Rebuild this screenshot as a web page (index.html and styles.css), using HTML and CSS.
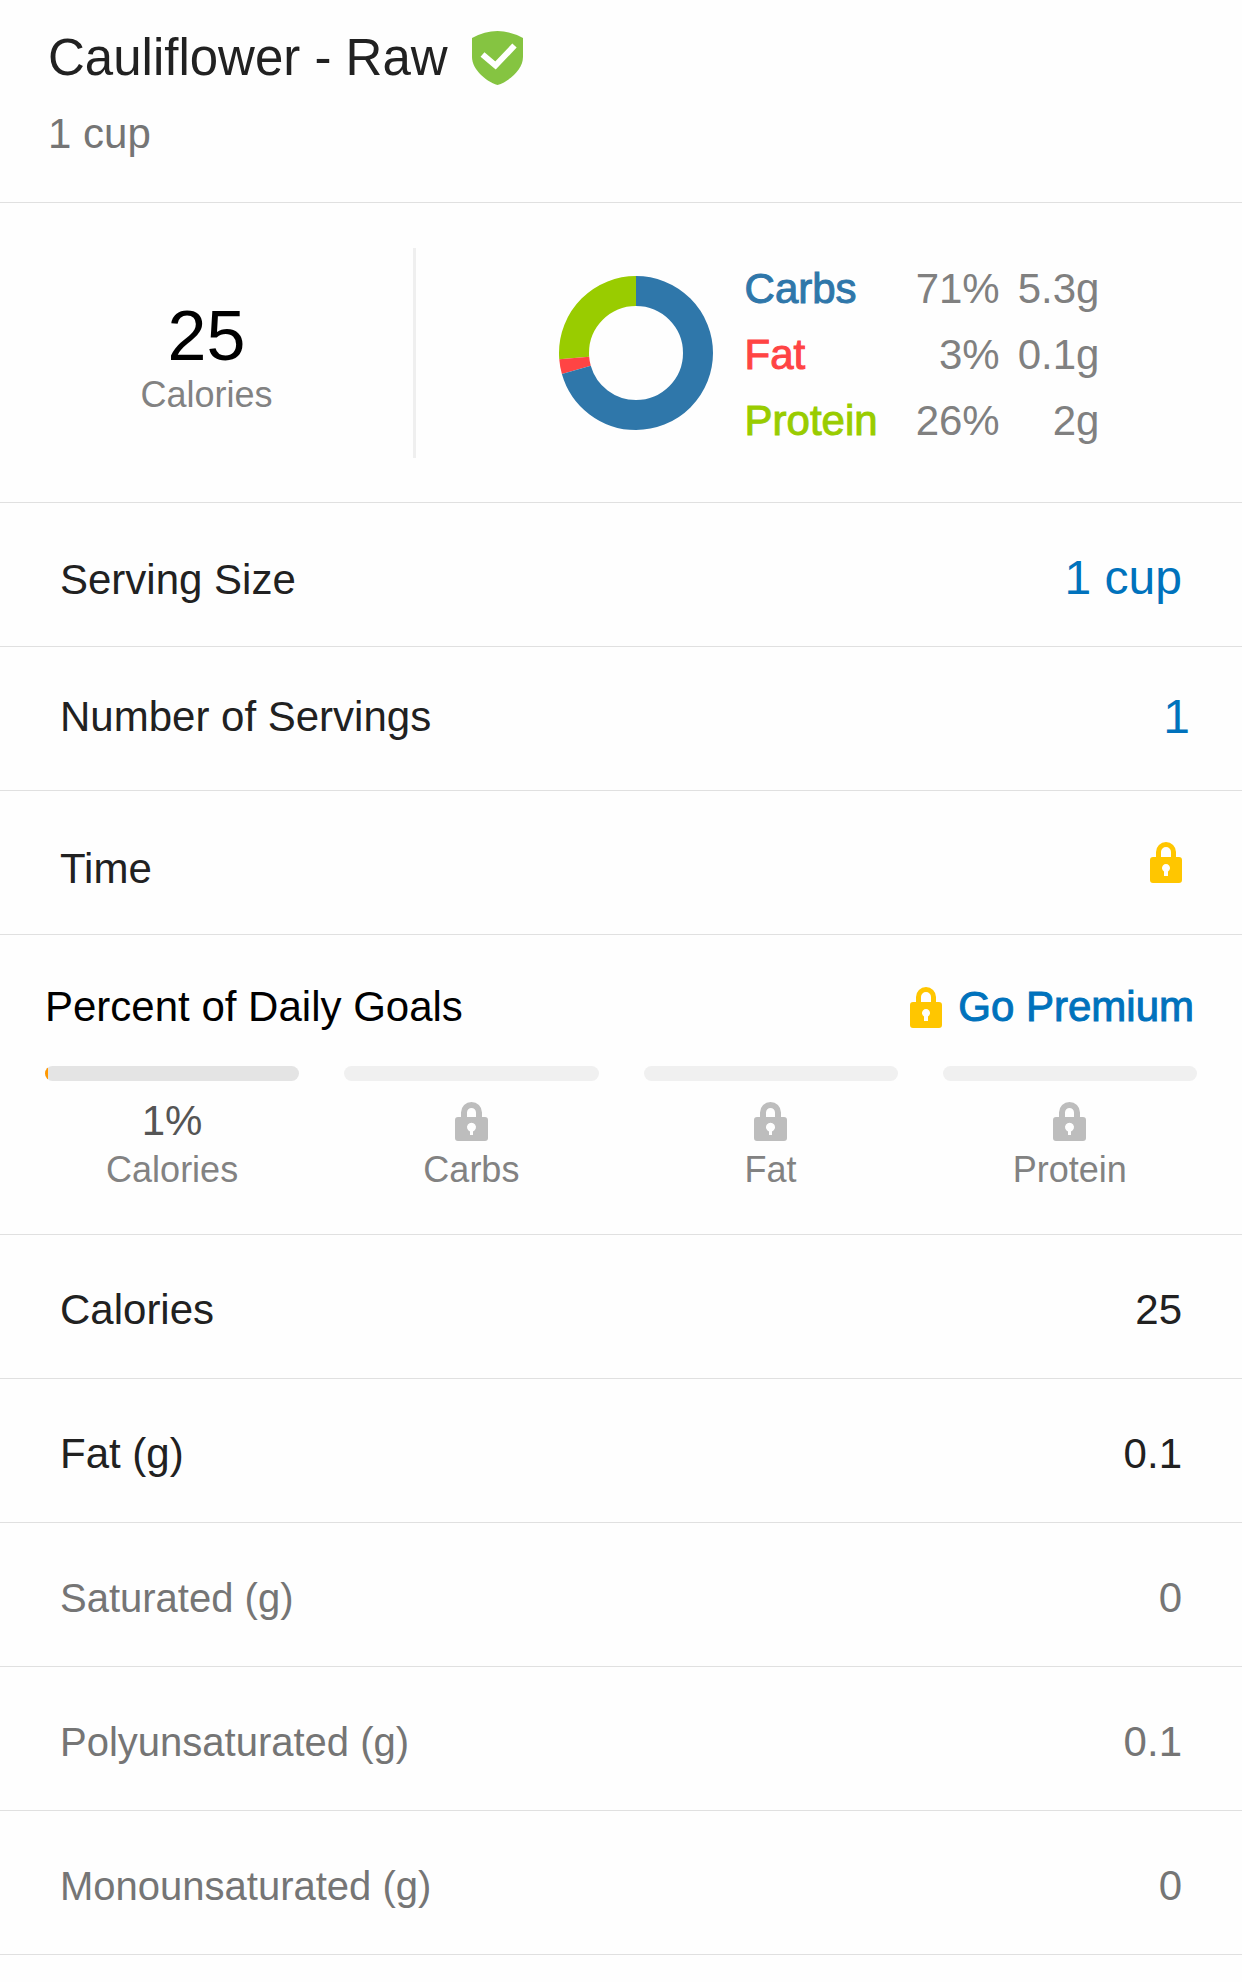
FILE: index.html
```html
<!DOCTYPE html>
<html lang="en">
<head>
    <meta charset="UTF-8">
    <meta name="viewport" content="width=device-width, initial-scale=1.0">
    <title>Cauliflower - Raw</title>
    <link rel="stylesheet" href="styles.css">
</head>
<body>
    <!-- Shared lock icons -->
    <svg class="sprite" aria-hidden="true">
        <symbol id="lock" viewBox="0 0 32 41">
            <path d="M8.5 17V10a7.5 7.5 0 0 1 15 0v7" fill="none" stroke="currentColor" stroke-width="5"/>
            <path fill="currentColor" fill-rule="evenodd" d="M3 15h26a3 3 0 0 1 3 3v20a3 3 0 0 1-3 3H3a3 3 0 0 1-3-3V18a3 3 0 0 1 3-3zM14 29.5V34h4v-4.500a4 4 0 1 0-4 0z"/>
        </symbol>
        <symbol id="lock-small" viewBox="0 0 33 39">
            <path d="M9 17v-6.500a7.5 7.5 0 0 1 15 0V17" fill="none" stroke="currentColor" stroke-width="6"/>
            <path fill="currentColor" fill-rule="evenodd" d="M3 15h27a3 3 0 0 1 3 3v18a3 3 0 0 1-3 3H3a3 3 0 0 1-3-3V18a3 3 0 0 1 3-3zM15 29.500V33h3v-3.500a4.500 4.500 0 1 0-3 0z"/>
        </symbol>
    </svg>

    <header class="food-header">
        <div class="food-title">
            <h1>Cauliflower - Raw</h1>
            <svg class="verified" viewBox="0 0 51 54" role="img" aria-label="Verified">
                <path d="M0 7Q25.5 -7 51 7V26C51 38 38 50 25.5 54C13 50 0 38 0 26Z" fill="#85c441"/>
                <path d="M10.5 23.5L23.500 34.500L42.500 14.500" fill="none" stroke="#fff" stroke-width="6"/>
            </svg>
        </div>
        <p class="food-serving">1 cup</p>
    </header>

    <section class="summary">
        <div class="summary-calories">
            <div class="calories-number">25</div>
            <div class="caption">Calories</div>
        </div>
        <div class="summary-macros">
            <svg class="donut" viewBox="0 0 154 154" aria-hidden="true">
                <g fill="none" stroke-width="30" transform="rotate(-90 77 77)">
                    <circle cx="77" cy="77" r="62" pathLength="1000" stroke="#99cc00" stroke-dasharray="0 737 263"/>
                    <circle cx="77" cy="77" r="62" pathLength="1000" stroke="#ff4444" stroke-dasharray="0 706 31 263"/>
                    <circle cx="77" cy="77" r="62" pathLength="1000" stroke="#2f77aa" stroke-dasharray="706 294"/>
                </g>
            </svg>
            <table class="macros">
                <tr>
                    <th class="carbs" scope="row">Carbs</th>
                    <td class="percent">71%</td>
                    <td class="grams">5.3g</td>
                </tr>
                <tr>
                    <th class="fat" scope="row">Fat</th>
                    <td class="percent">3%</td>
                    <td class="grams">0.1g</td>
                </tr>
                <tr>
                    <th class="protein" scope="row">Protein</th>
                    <td class="percent">26%</td>
                    <td class="grams">2g</td>
                </tr>
            </table>
        </div>
    </section>

    <form class="entry">
        <div class="row">
            <label for="serving-size">Serving Size</label>
            <button type="button" class="row-value" id="serving-size">1 cup</button>
        </div>
        <div class="row row-count">
            <label for="servings">Number of Servings</label>
            <input type="text" class="row-value" id="servings" inputmode="decimal" value="1">
        </div>
        <div class="row">
            <label for="time">Time</label>
            <button type="button" class="row-lock" id="time" aria-label="Time, premium only">
                <svg class="lock"><use href="#lock"/></svg>
            </button>
        </div>
    </form>

    <section class="goals">
        <div class="goals-header">
            <h2>Percent of Daily Goals</h2>
            <a class="premium" href="#premium">
                <svg class="lock" aria-hidden="true"><use href="#lock"/></svg>
                <span>Go Premium</span>
            </a>
        </div>
        <div class="goals-grid">
            <div class="goal">
                <div class="bar bar-active"><div class="bar-fill" style="width: 1%"></div></div>
                <div class="goal-value">1%</div>
                <div class="goal-name">Calories</div>
            </div>
            <div class="goal">
                <div class="bar"></div>
                <div class="goal-value"><svg class="lock-small"><use href="#lock-small"/></svg></div>
                <div class="goal-name">Carbs</div>
            </div>
            <div class="goal">
                <div class="bar"></div>
                <div class="goal-value"><svg class="lock-small"><use href="#lock-small"/></svg></div>
                <div class="goal-name">Fat</div>
            </div>
            <div class="goal">
                <div class="bar"></div>
                <div class="goal-value"><svg class="lock-small"><use href="#lock-small"/></svg></div>
                <div class="goal-name">Protein</div>
            </div>
        </div>
    </section>

    <table class="nutrients">
        <tr><th scope="row">Calories</th><td>25</td></tr>
        <tr><th scope="row">Fat (g)</th><td>0.1</td></tr>
        <tr class="sub"><th scope="row">Saturated (g)</th><td>0</td></tr>
        <tr class="sub"><th scope="row">Polyunsaturated (g)</th><td>0.1</td></tr>
        <tr class="sub"><th scope="row">Monounsaturated (g)</th><td>0</td></tr>
    </table>
</body>
</html>
```
FILE: styles.css
```css
* {
    box-sizing: border-box;
}

body {
    margin: 0;
    background-color: #fefefe;
    color: #212121;
    font-family: "Helvetica Neue", "Liberation Sans", Arial, sans-serif;
    font-size: 42px;
    line-height: 48px;
}

h1, h2, p {
    margin: 0;
    font-weight: normal;
}

button, input {
    font: inherit;
    border: none;
    padding: 0;
    background: none;
}

table {
    border-spacing: 0;
}

th, td {
    padding: 0;
    font-weight: normal;
}

.sprite {
    display: none;
}

.lock {
    width: 32px;
    height: 41px;
    color: #ffc600;
}

.lock-small {
    width: 33px;
    height: 39px;
    color: #bdbdbd;
}

/* Header */
.food-header {
    padding: 28px 48px 44px;
    border-bottom: 1px solid #e0e0e0;
}

.food-title {
    display: flex;
    align-items: center;
    gap: 24px;
    margin-bottom: 22px;
}

h1 {
    font-size: 51px;
    line-height: 60px;
}

.verified {
    width: 51px;
    height: 54px;
}

.food-serving {
    color: #757575;
}

/* Calories and macros */
.summary {
    display: flex;
    padding: 45px 0 44px;
    border-bottom: 1px solid #e0e0e0;
}

.summary-calories {
    flex: 1;
    display: flex;
    flex-direction: column;
    justify-content: center;
    min-height: 210px;
    padding-top: 14px;
    border-right: 3px solid #efefef;
    text-align: center;
}

.calories-number {
    color: #000;
    font-size: 70px;
    line-height: 70px;
}

.caption {
    color: #828282;
    font-size: 36px;
}

.summary-macros {
    flex: 2;
    display: flex;
    justify-content: center;
    align-items: center;
    gap: 32px;
}

.donut {
    width: 154px;
    height: 154px;
}

.macros {
    padding-top: 4px;
    color: #808080;
    line-height: 66px;
}

.macros th {
    text-align: left;
    -webkit-text-stroke: 1px currentColor;
}

.macros td {
    text-align: right;
}

.carbs {
    color: #2f77aa;
}

.fat {
    color: #ff4444;
}

.protein {
    color: #99cc00;
}

.macros .percent {
    padding-left: 38px;
}

.macros .grams {
    padding-left: 18px;
}

/* Entry rows */
.row {
    display: flex;
    justify-content: space-between;
    align-items: baseline;
    min-height: 144px;
    padding: 51px 60px 0;
    border-bottom: 1px solid #e0e0e0;
}

.row-count {
    align-items: center;
    padding: 0 52px 4px 60px;
}

.row-value {
    color: #0072bc;
    font-size: 48px;
    text-align: right;
}

input.row-value {
    width: 200px;
}

.row-lock .lock {
    display: inline-block;
    vertical-align: baseline;
}

/* Daily goals */
.goals {
    padding: 48px 45px 44px;
    border-bottom: 1px solid #e0e0e0;
}

.goals-header {
    display: flex;
    justify-content: space-between;
    align-items: center;
    margin-bottom: 35px;
}

h2 {
    color: #000;
    font-size: 42px;
}

.premium {
    display: flex;
    align-items: center;
    gap: 16px;
    padding-right: 3px;
    color: #0072bc;
    text-decoration: none;
    -webkit-text-stroke: 1px currentColor;
}

.goals-grid {
    display: grid;
    grid-template-columns: repeat(4, 1fr);
    gap: 45px;
    text-align: center;
}

.bar {
    height: 15px;
    margin-bottom: 19px;
    border-radius: 8px;
    background-color: #f0f0f0;
    overflow: hidden;
}

.bar-active {
    background-color: #e4e4e4;
}

.bar-fill {
    height: 100%;
    background-color: #ff9800;
}

.goal-value {
    display: flex;
    justify-content: center;
    align-items: center;
    height: 42px;
    margin-bottom: 7px;
    color: #555;
}

.goal-name {
    color: #828282;
    font-size: 36px;
    line-height: 42px;
}

.goals-grid {
    margin-bottom: -1px;
}

/* Nutrition facts */
.nutrients {
    width: 100%;
}

.nutrients th, .nutrients td {
    height: 144px;
    padding-top: 6px;
    border-bottom: 1px solid #e0e0e0;
}

.nutrients th {
    padding-left: 60px;
    text-align: left;
}

.nutrients td {
    padding-right: 60px;
    text-align: right;
}

.sub {
    color: #757575;
}

.sub th {
    font-size: 40px;
}
```
